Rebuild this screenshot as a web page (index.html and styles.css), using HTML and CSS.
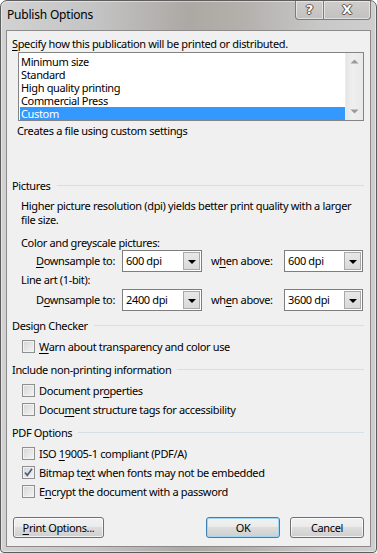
FILE: index.html
```html
<!DOCTYPE html>
<html>
<head>
<meta charset="utf-8">
<title>Publish Options</title>
<link rel="stylesheet" href="styles.css">
</head>
<body>
<div class="window">
  <div class="titlebar">
    <span class="title">Publish Options</span>
    <div class="cbtns">
      <span class="cbtn help">?</span>
      <span class="cbtn close">X</span>
    </div>
  </div>
  <div class="client">
    <div class="intro"><u>S</u>pecify how this publication will be printed or distributed.</div>
    <div class="listbox">
      <div class="items">
        <div class="item">Minimum size</div>
        <div class="item">Standard</div>
        <div class="item">High quality printing</div>
        <div class="item">Commercial Press</div>
        <div class="item sel">Custom</div>
      </div>
      <div class="vscroll">
        <svg class="arr" width="9" height="5" viewBox="0 0 9 5"><path d="M0.5 4.5 L4.5 0.5 L8.5 4.5 Z" fill="#9a9a9a"/></svg>
        <svg class="arr" width="9" height="5" viewBox="0 0 9 5"><path d="M0.5 0.5 L4.5 4.5 L8.5 0.5 Z" fill="#9a9a9a"/></svg>
      </div>
    </div>
    <div class="desc">Creates a file using custom settings</div>

    <div class="ghead first"><span>Pictures</span><i class="rule"></i></div>
    <p class="note">Higher picture resolution (dpi) yields better print quality with a larger<br>file size.</p>
    <div class="sub s1">Color and greyscale pictures:</div>
    <div class="dpirow">
      <span class="lab1"><u>D</u>ownsample to:</span>
      <span class="combo c1"><span class="val">600 dpi</span><span class="drop"><i></i></span></span>
      <span class="lab2">w<u>h</u>en above:</span>
      <span class="combo c2"><span class="val">600 dpi</span><span class="drop"><i></i></span></span>
    </div>
    <div class="sub s2">Line art (1-bit):</div>
    <div class="dpirow">
      <span class="lab1">D<u>o</u>wnsample to:</span>
      <span class="combo c1"><span class="val">2400 dpi</span><span class="drop"><i></i></span></span>
      <span class="lab2">wh<u>e</u>n above:</span>
      <span class="combo c2"><span class="val">3600 dpi</span><span class="drop"><i></i></span></span>
    </div>

    <div class="ghead g2"><span>Design Checker</span><i class="rule"></i></div>
    <div class="checks">
      <div class="chk"><span class="box"></span><span><u>W</u>arn about transparency and color use</span></div>
    </div>

    <div class="ghead g3"><span>Include non-printing information</span><i class="rule"></i></div>
    <div class="checks">
      <div class="chk"><span class="box"></span><span>Document pr<u>o</u>perties</span></div>
      <div class="chk"><span class="box"></span><span>Docu<u>m</u>ent structure tags for accessibility</span></div>
    </div>

    <div class="ghead g3"><span>PDF Options</span><i class="rule"></i></div>
    <div class="checks">
      <div class="chk"><span class="box"></span><span>ISO <u>1</u>9005-1 compliant (PDF/A)</span></div>
      <div class="chk"><span class="box on"><svg width="11" height="11" viewBox="0 0 11 11"><path d="M2 5.5 L4.3 8.3 L9 1.8" fill="none" stroke="#4b5d7c" stroke-width="1.7"/></svg></span><span>Bitmap te<u>x</u>t when fonts may not be embedded</span></div>
      <div class="chk"><span class="box"></span><span>E<u>n</u>crypt the document with a password</span></div>
    </div>

    <div class="footer">
      <button class="btn print"><u>P</u>rint Options...</button>
      <span class="spacer"></span>
      <button class="btn ok">OK</button>
      <button class="btn cancel">Cancel</button>
    </div>
  </div>
</div>
</body>
</html>
```
FILE: styles.css
```css
html, body {
  margin: 0;
  padding: 0;
  background: #ffffff;
}
body {
  width: 377px;
  height: 553px;
  font-family: "Noto Sans", "Open Sans", sans-serif;
  font-size: 11px;
  letter-spacing: -0.35px;
  line-height: 14px;
  color: #000;
  white-space: nowrap;
}
u {
  text-decoration: underline;
  text-underline-offset: 2px;
  text-decoration-thickness: 1px;
}
.window {
  box-sizing: border-box;
  width: 377px;
  height: 553px;
  border: 1px solid #5e5e5e;
  border-radius: 7px 7px 4px 4px;
  padding: 0 5px 5px 5px;
  display: flex;
  flex-direction: column;
  background: linear-gradient(90deg, #d2d2d2 0%, #c4c4c4 25%, #aca8a4 50%, #b4b0ac 65%, #c8c8c8 85%, #cfcfcf 100%);
  box-shadow: inset 0 0 0 1px rgba(255,255,255,0.45);
}
.titlebar {
  height: 29px;
  display: flex;
  justify-content: space-between;
  align-items: flex-start;
}
.title {
  padding-left: 1px;
  margin-top: 6px;
  line-height: 16px;
  font-size: 12px;
  letter-spacing: -0.2px;
  color: #000;
}
.cbtns {
  display: flex;
}
.cbtn {
  box-sizing: border-box;
  height: 19px;
  border: 1px solid #7d7b79;
  border-top: none;
  background: linear-gradient(#cfcdcb, #c3c1bf);
  box-shadow: inset 0 0 0 1px rgba(255,255,255,0.5);
  display: flex;
  align-items: center;
  justify-content: center;
  font-family: "DejaVu Sans", sans-serif;
  font-weight: bold;
  letter-spacing: 0;
  color: #fff;
  font-size: 13px;
  text-shadow: 0 0 1px #444, 1px 0 0 #555, -1px 0 0 #555, 0 1px 0 #555, 0 -1px 0 #777;
}
.help {
  width: 29px;
  border-radius: 0 0 0 4px;
}
.close {
  width: 48px;
  margin-left: -1px;
  border-radius: 0 0 4px 0;
}
.client {
  flex: 1;
  background: #f0f0f0;
  border: 1px solid #8b8b8b;
  padding: 5px 6px 0 5px;
  display: flex;
  flex-direction: column;
}
.intro {
  line-height: 15px;
}
.listbox {
  margin-top: 1px;
  margin-left: 6px;
  height: 69px;
  box-sizing: border-box;
  border: 1px solid #848484;
  background: #fff;
  display: flex;
}
.items {
  flex: 1;
  padding: 2px 0 0 1px;
}
.item {
  height: 13px;
  line-height: 13px;
  padding-left: 1px;
}
.item.sel {
  background: #3399ff;
  color: #fff;
}
.vscroll {
  width: 17px;
  background: linear-gradient(90deg, #e6e6e6, #efefef 40%, #e9e9e9);
  border-left: 1px solid #ececec;
  display: flex;
  flex-direction: column;
  justify-content: space-between;
  align-items: center;
  padding: 6px 0 6px 0;
}
.arr { display: block; }
.desc {
  margin-top: 2px;
  padding-left: 5px;
  line-height: 15px;
}
.ghead {
  display: flex;
  align-items: center;
  line-height: 14px;
}
.ghead .rule {
  flex: 1;
  height: 1px;
  background: #d5dfe5;
  margin-left: 6px;
  margin-top: -1px;
}
.ghead.first { margin-top: 41px; }
.ghead.g2 { margin-top: 8px; }
.ghead.g3 { margin-top: 7px; }
.note {
  margin: 6px 0 0 9px;
  line-height: 14px;
}
.sub {
  margin-left: 9px;
  line-height: 14px;
}
.sub.s1 { margin-top: 9px; }
.sub.s2 { margin-top: 1px; }
.dpirow {
  margin-top: 0;
  padding-left: 24px;
  display: flex;
  align-items: center;
  height: 22px;
}
.sub.s2 + .dpirow { margin-top: 2px; }
.lab1 { width: 86px; }
.lab2 { width: 73px; margin-left: 9px; }
.combo {
  box-sizing: border-box;
  height: 22px;
  border: 1px solid #7e7e7e;
  background: #fff;
  display: flex;
  align-items: center;
  justify-content: space-between;
}
.c1 { width: 80px; }
.c2 { width: 79px; }
.val { padding-left: 3px; }
.drop {
  box-sizing: border-box;
  width: 17px;
  height: 18px;
  margin-right: 1px;
  border: 1px solid #a9a9a9;
  background: linear-gradient(#e8e8e8, #d9d9d9);
  display: flex;
  align-items: center;
  justify-content: center;
}
.drop i {
  width: 0;
  height: 0;
  border-left: 4px solid transparent;
  border-right: 4px solid transparent;
  border-top: 4px solid #000;
  margin-top: 1px;
}
.checks {
  margin-top: 4px;
  padding-left: 10px;
  display: flex;
  flex-direction: column;
}
.chk {
  height: 19px;
  display: flex;
  align-items: center;
}
.box {
  box-sizing: border-box;
  width: 13px;
  height: 13px;
  border: 1px solid #8e8f8f;
  background: linear-gradient(135deg, #d6d6d6, #f4f4f4);
  box-shadow: inset 0 0 0 1px #f2f2f2;
  margin-right: 4px;
  display: flex;
  align-items: center;
  justify-content: center;
  flex: none;
}
.box svg { display: block; }
.footer {
  margin-top: 16px;
  display: flex;
  padding-left: 1px;
}
.spacer { flex: 1; }
.btn {
  box-sizing: border-box;
  height: 21px;
  border: 1px solid #707070;
  border-radius: 3px;
  background: linear-gradient(#f2f2f2 0%, #ebebeb 45%, #dddddd 50%, #cfcfcf 100%);
  box-shadow: inset 0 0 0 1px rgba(255,255,255,0.7);
  font-family: "Noto Sans", "Open Sans", sans-serif;
  font-size: 11px;
  letter-spacing: -0.35px;
  line-height: 14px;
  color: #000;
  padding: 0;
}
.print { width: 91px; }
.ok {
  width: 74px;
  border-color: #3c7fb1;
  box-shadow: inset 0 0 0 1px #9fd8f6;
}
.cancel { width: 74px; margin-left: 10px; }
```
